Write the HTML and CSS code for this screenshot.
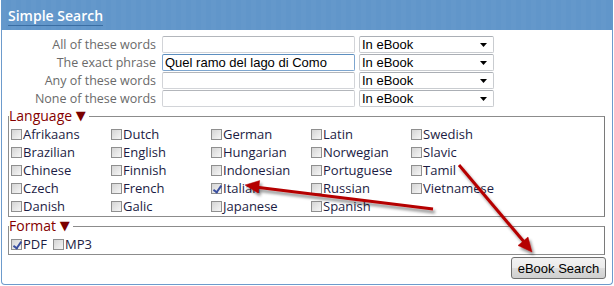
FILE: index.html
```html
<!DOCTYPE html>
<html>
<head>
<meta charset="utf-8">
<link rel="stylesheet" href="styles.css">
</head>
<body>
<div class="panel">
  <div class="header"><span class="title">Simple Search</span></div>
  <div class="body">
    <div class="rows">
      <label class="lbl">All of these words</label><input class="txt" type="text"><select class="sel"><option>In eBook</option></select>
      <label class="lbl">The exact phrase</label><input class="txt focus" type="text" value="Quel ramo del lago di Como"><select class="sel"><option>In eBook</option></select>
      <label class="lbl">Any of these words</label><input class="txt" type="text"><select class="sel"><option>In eBook</option></select>
      <label class="lbl">None of these words</label><input class="txt" type="text"><select class="sel"><option>In eBook</option></select>
    </div>
    <fieldset class="group lang">
      <legend class="legend">Language <span class="tri">▼</span></legend>
      <div class="grid">
        <label class="cb"><input type="checkbox">Afrikaans</label>
        <label class="cb"><input type="checkbox">Dutch</label>
        <label class="cb"><input type="checkbox">German</label>
        <label class="cb"><input type="checkbox">Latin</label>
        <label class="cb"><input type="checkbox">Swedish</label>
        <label class="cb"><input type="checkbox">Brazilian</label>
        <label class="cb"><input type="checkbox">English</label>
        <label class="cb"><input type="checkbox">Hungarian</label>
        <label class="cb"><input type="checkbox">Norwegian</label>
        <label class="cb"><input type="checkbox">Slavic</label>
        <label class="cb"><input type="checkbox">Chinese</label>
        <label class="cb"><input type="checkbox">Finnish</label>
        <label class="cb"><input type="checkbox">Indonesian</label>
        <label class="cb"><input type="checkbox">Portuguese</label>
        <label class="cb"><input type="checkbox">Tamil</label>
        <label class="cb"><input type="checkbox">Czech</label>
        <label class="cb"><input type="checkbox">French</label>
        <label class="cb"><input type="checkbox" checked>Italian</label>
        <label class="cb"><input type="checkbox">Russian</label>
        <label class="cb"><input type="checkbox">Vietnamese</label>
        <label class="cb"><input type="checkbox">Danish</label>
        <label class="cb"><input type="checkbox">Galic</label>
        <label class="cb"><input type="checkbox">Japanese</label>
        <label class="cb"><input type="checkbox">Spanish</label>
      </div>
    </fieldset>
    <fieldset class="group fmt">
      <legend class="legend">Format <span class="tri">▼</span></legend>
      <div class="inline">
        <label class="cb"><input type="checkbox" checked>PDF</label>
        <label class="cb"><input type="checkbox">MP3</label>
      </div>
    </fieldset>
    <div class="actions"><button class="btn" type="button">eBook Search</button></div>
  </div>
  <svg class="arrows" width="614" height="286" viewBox="0 0 614 286">
    <defs>
      <filter id="sh" x="-20%" y="-20%" width="140%" height="140%">
        <feGaussianBlur in="SourceAlpha" stdDeviation="1.6"/>
        <feOffset dx="2" dy="3" result="b"/>
        <feComponentTransfer><feFuncA type="linear" slope="0.45"/></feComponentTransfer>
        <feMerge><feMergeNode/><feMergeNode in="SourceGraphic"/></feMerge>
      </filter>
    </defs>
    <g filter="url(#sh)" fill="#b50000" stroke="#b50000">
      <line x1="432" y1="209" x2="254" y2="187" stroke-width="3"/>
      <polygon points="244,185 258.7,180.6 257.1,193" stroke-width="0.5"/>
      <line x1="458" y1="165" x2="524" y2="243" stroke-width="3"/>
      <polygon points="531,252 527,237 517,245.5" stroke-width="0.5"/>
    </g>
  </svg>
</div>
</body>
</html>
```
FILE: styles.css
```css
html, body { margin: 0; padding: 0; background: #fff; }
.panel {
  position: relative;
  width: 612px;
  height: 285px;
  margin-left: 1px;
  box-sizing: border-box;
  border: 1px solid #6d9bcc;
  border-top: none;
  border-radius: 0 0 4px 4px;
  font-family: "Open Sans", "DejaVu Sans", sans-serif;
}
.header {
  height: 30px;
  margin: 0 -1px;
  background: repeating-linear-gradient(90deg, #6498cb 0 5px, #6196ca 5px 10px);
  box-sizing: border-box;
  padding: 4px 0 0 7px;
}
.title {
  color: #fff;
  font-size: 14px;
  font-weight: 600;
  border-bottom: 1px solid #3a6da2;
  line-height: 18px;
  display: inline-block;
}
.body { padding: 6px 0 0 0; }
.rows {
  display: grid;
  grid-template-columns: 160px 193px 139px;
  grid-auto-rows: 18px;
}
.lbl {
  text-align: right;
  color: #6a6a6a;
  font-size: 12.5px;
  line-height: 18px;
  padding-right: 6px;
}
.txt {
  margin: 0;
  width: 193px;
  height: 17px;
  box-sizing: border-box;
  border: 1px solid #d2d4d8;
  border-top-color: #b3b6bb;
  border-radius: 2px;
  padding: 0 2px;
  font-family: "Liberation Sans", Arial, sans-serif;
  font-size: 13px;
  color: #000;
  outline: none;
}
.txt.focus { border-color: #7ea6cf; border-top-color: #5c8fc0; }
.sel {
  margin: 0 0 0 4px;
  width: 135px;
  height: 17px;
  box-sizing: border-box;
  border: 1px solid #c9ccd0;
  border-top-color: #abafb5;
  border-radius: 2px;
  padding: 0 0 0 2px;
  font-family: "Liberation Sans", Arial, sans-serif;
  font-size: 13px;
  color: #000;
  background: #fff url("data:image/svg+xml,%3Csvg xmlns='http://www.w3.org/2000/svg' width='7' height='4'%3E%3Cpath d='M0 0h7L3.5 4z' fill='%23000'/%3E%3C/svg%3E") no-repeat right 6px center;
  -webkit-appearance: none;
  appearance: none;
}
.group {
  margin: 0 7px 0 6px;
  border: 1px solid #8c8c8c;
  border-right-color: #7a7a7a;
  padding: 0 0 0 2px;
  box-sizing: border-box;
  min-width: 0;
}
.lang { margin-top: 1px; height: 108px; }
.fmt { margin-top: 2px; height: 36px; }
.legend {
  color: #850000;
  font-size: 14px;
  padding: 0 3px 0 0;
  margin-left: -2px;
  line-height: 14px;
  height: 14px;
}
.tri { font-family: "DejaVu Sans", sans-serif; font-size: 13px; line-height: 14px; color: #7a0000; vertical-align: top; }
.grid {
  display: grid;
  grid-template-columns: repeat(5, 100px);
  grid-auto-rows: 18px;
  margin-top: 2px;
}
.inline { display: flex; gap: 6px; margin-top: 2px; }
.cb {
  display: flex;
  align-items: center;
  font-size: 13px;
  color: #1c1c44;
  line-height: 18px;
  height: 18px;
}
.cb input {
  -webkit-appearance: none;
  appearance: none;
  width: 11px;
  height: 11px;
  margin: 0 1px 0 0;
  border: 1px solid #8f8f8f;
  background: linear-gradient(135deg, #d4d4d4, #f6f6f6);
  box-sizing: border-box;
  position: relative;
}
.cb input:checked::after {
  content: "";
  position: absolute;
  left: 3px;
  top: 0px;
  width: 3px;
  height: 7px;
  border-right: 2px solid #3a4fa0;
  border-bottom: 2px solid #3a4fa0;
  transform: rotate(35deg);
}
.actions { display: flex; justify-content: flex-end; padding: 2px 6px 0 0; }
.btn {
  width: 95px;
  height: 22px;
  border: 1px solid #707070;
  border-radius: 3px;
  background: linear-gradient(#f2f2f2 0%, #ebebeb 50%, #dddddd 51%, #cfcfcf 100%);
  font-family: "Liberation Sans", Arial, sans-serif;
  font-size: 13px;
  color: #000;
  padding: 0;
}
.arrows { position: absolute; left: -1px; top: 0; pointer-events: none; }
```
